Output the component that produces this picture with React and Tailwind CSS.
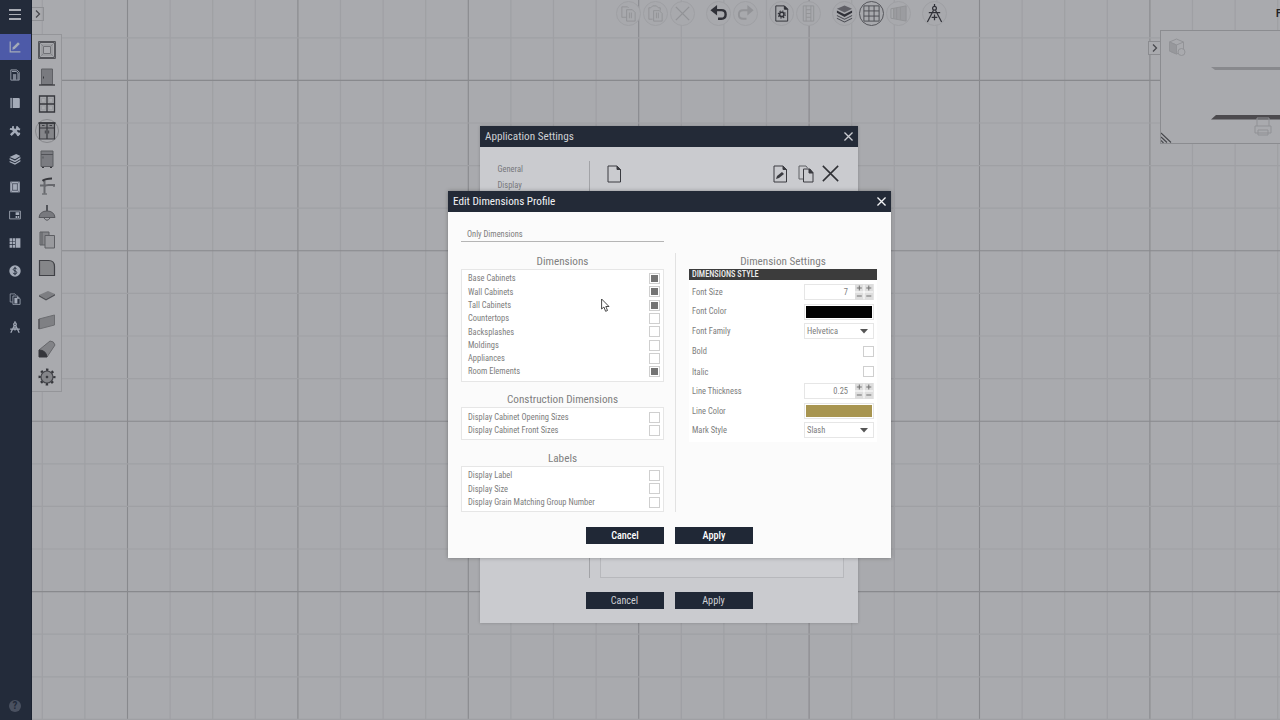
const NAV = ['plan', 'page', 'book', 'tools', 'layers', 'frame', 'card', 'table', 'price', 'copy', 'compass'];

const PALETTE = ['room', 'door', 'window', 'cabinet', 'appliance', 'faucet', 'lamp', 'panels', 'countertop', 'tile', 'board', 'molding', 'gear'];

const TOOLBAR = [
  [['copy', true], ['paste', true], ['remove', true]],
  [['undo'], ['redo', true]],
  [['settings'], ['column', true]],
  [['stack'], ['grid', false, true], ['perspective', true]],
  [['compass']],
];

const DIMENSIONS = [
  ['Base Cabinets', true],
  ['Wall Cabinets', true],
  ['Tall Cabinets', true],
  ['Countertops', false],
  ['Backsplashes', false],
  ['Moldings', false],
  ['Appliances', false],
  ['Room Elements', true],
];

const CONSTRUCTION = [
  ['Display Cabinet Opening Sizes', false],
  ['Display Cabinet Front Sizes', false],
];

const LABELS = [
  ['Display Label', false],
  ['Display Size', false],
  ['Display Grain Matching Group Number', false],
];

const STEP = 42.6;

function range(n) {
  return Array.from({ length: n }, (_, i) => i);
}

function CanvasGrid() {
  return (
    <svg className="absolute inset-0" width="1280" height="720">
      {range(30).map((i) => (
        <line key={`v${i}`} x1={42.3 + i * STEP} x2={42.3 + i * STEP} y1="0" y2="720"
          stroke={i % 4 === 2 ? '#88898d' : '#9fa0a4'} strokeWidth={i % 4 === 2 ? 1.1 : 1.2} />
      ))}
      {range(17).map((i) => (
        <line key={`h${i}`} y1={37.8 + i * STEP} y2={37.8 + i * STEP} x1="32" x2="1280"
          stroke={i % 4 === 1 ? '#88898d' : '#9fa0a4'} strokeWidth={i % 4 === 1 ? 1.1 : 1.2} />
      ))}
    </svg>
  );
}

const navArt = {
  plan: (
    <g>
      <path d="M2 1v17h17" fill="none" stroke="currentColor" strokeWidth="2" />
      <path d="M5.500 14.500l1-4 8.500-8.500 3 3-8.500 8.500z" fill="currentColor" />
    </g>
  ),
  page: (
    <g>
      <path d="M3 1.500h10l4 4v13H3z" fill="none" stroke="currentColor" strokeWidth="1.400" />
      <path d="M6.500 8.500H12V18H6.500z" fill="currentColor" opacity=".7" />
      <path d="M5 4h7l3 3v11" fill="none" stroke="currentColor" strokeWidth="1.600" />
    </g>
  ),
  book: (
    <g>
      <path d="M2 1.500h3.500v17H2z" fill="currentColor" opacity=".8" />
      <path d="M6.500 1.500H16q2 0 2 2v13q0 2-2 2H6.500z" fill="currentColor" />
    </g>
  ),
  tools: (
    <g fill="none" stroke="currentColor">
      <path d="M5 5l12 12" strokeWidth="4.400" />
      <path d="M16 4L3 17" strokeWidth="4" />
      <path d="M1.500 6.500l4.500 1 1-5.500M13 2l1 4.500 4.500 1M13.500 17.500l4.500-4.500" strokeWidth="3" />
    </g>
  ),
  layers: (
    <g fill="currentColor">
      <path d="M1 6.500l11-5 7 3.500-9 5.500z" />
      <path d="M1 8.300l9 4 9-5.500v3l-9 5.500-9-4z" />
      <path d="M1 13.200l9 4 9-5.500v2.300l-9 5.500-9-4z" />
    </g>
  ),
  frame: (
    <g>
      <path d="M2 1h16v18H2z" fill="currentColor" />
      <path d="M6 4.500h8v11H6z" fill="none" stroke="#3a4252" strokeWidth="1.200" />
      <path d="M2 1l4 3.500M18 1l-4 3.500M2 19l4-3.500M18 19l-4-3.500" stroke="#3a4252" strokeWidth=".8" />
    </g>
  ),
  card: (
    <g>
      <path d="M1 3.500h18v13H1z" fill="none" stroke="currentColor" strokeWidth="1.400" />
      <path d="M11 5.500h6v4.500h-6zM11 11.500h2.500v3.500H11zM14.500 11.500H17v3.500h-2.500z" fill="currentColor" />
    </g>
  ),
  table: (
    <path d="M1 2h4v4.500H1zM6 2h4v4.500H6zM1 7.700h4v4.500H1zM6 7.700h4v4.500H6zM1 13.400h4v4.500H1zM6 13.400h4v4.500H6zM11 2h8v16h-8z" fill="currentColor" />
  ),
  price: (
    <g>
      <circle cx="10" cy="10" r="9.500" fill="currentColor" />
      <path d="M13 7q-1-2-3-2t-3 2.200q0 1.800 3 2.600t3 2.900q0 2.300-3 2.300t-3-2M10 3v14" fill="none" stroke="#232b3a" strokeWidth="1.500" />
    </g>
  ),
  copy: (
    <g>
      <path d="M6 15H2V1.500h8l2 2" fill="none" stroke="currentColor" strokeWidth="1.200" />
      <path d="M6.500 5H14l4.500 4.500V19h-12z" fill="none" stroke="currentColor" strokeWidth="1.300" />
      <path d="M9 8h5v9.500H9z" fill="currentColor" />
      <path d="M13.500 5l4.500 4.500h-4.500z" fill="currentColor" />
    </g>
  ),
  compass: (
    <g fill="none" stroke="currentColor" strokeWidth="2.100">
      <circle cx="10" cy="5.500" r="2.200" />
      <path d="M10 .5v3M9 7.500L3 19.500M11 7.500l6 12M2 13.500h16M10 10v6" />
    </g>
  ),
};

const paletteArt = {
  room: (
    <g>
      <path d="M2 2h16v16H2z" strokeWidth="1.400" />
      <path d="M5 5h10v10H5z" stroke="#8b8c90" strokeWidth=".9" />
      <path d="M6.500 6.500h7v7h-7z" stroke="#707176" />
      <path d="M2 2l4.500 4.500M18 2l-4.500 4.500M2 18l4.500-4.500M18 18l-4.500-4.500" stroke="#808186" strokeWidth=".8" />
    </g>
  ),
  door: (
    <g>
      <path d="M4.500 2h11v15.500h-11z" fill="#797a7f" stroke="#5f6065" />
      <path d="M2 18h16" strokeWidth="1.300" />
      <path d="M6.500 9.500v2" />
    </g>
  ),
  window: (
    <g>
      <path d="M4.500 4.300h3.800v4H4.500zM11.700 4.300h3.800v4h-3.800zM4.500 11.800h3.800v4H4.500zM11.700 11.800h3.800v4h-3.800z" stroke="#96979b" strokeWidth=".8" />
      <path d="M2.500 2h15v16h-15zM10 2v16M2.500 10h15" strokeWidth="1.300" />
    </g>
  ),
  cabinet: (
    <g>
      <path d="M2.500 2h15v16h-15z" fill="#85868a" strokeWidth="1.200" />
      <path d="M1.500 2h17" strokeWidth="1.600" />
      <path d="M2.500 7h15M10 2v16" strokeWidth="1.200" />
      <path d="M5 4.500h2.500M12.500 4.500H15M8.300 9.500v3M11.700 9.500v3" strokeWidth=".9" />
    </g>
  ),
  appliance: (
    <g>
      <path d="M4 2h12v15.500H4z" fill="#7b7c81" stroke="#5b5c61" />
      <path d="M4 5.500h12M6 7.500v2" stroke="#515257" />
      <path d="M5 18.500h2M13 18.500h2" />
    </g>
  ),
  faucet: (
    <g>
      <path d="M7.500 17.500V5M7.500 10.500q1-1.500 4-1.500h5.500v1.800M3 9.500h5" stroke="#67686d" strokeWidth="2" />
      <path d="M5.500 4.800q3-2.300 9.500-2.300" strokeWidth="2.200" />
      <path d="M5 18h5" stroke="#55565b" />
    </g>
  ),
  lamp: (
    <g>
      <path d="M10 2v6" strokeWidth="1.500" />
      <path d="M2 14.500q1-6.500 8-6.500t8 6.500z" fill="#78797e" stroke="#56575c" />
      <path d="M7 15q3 4.500 6 0" stroke="#56575c" />
    </g>
  ),
  panels: (
    <g fill="#85868a" stroke="#5d5e63">
      <path d="M3 2h9v13H3z" />
      <path d="M8 5.500h9.500V18H8z" fill="#999a9e" />
      <path d="M5 2v13" />
    </g>
  ),
  countertop: <path d="M2.500 2.500h9q6 0 6 6v9h-15z" fill="#858689" stroke="#3f4045" strokeWidth="1.200" />,
  tile: (
    <g stroke="none">
      <path d="M2 10l9-4 7 3-9 5z" fill="#7d7e82" />
      <path d="M2 10l7 4 9-5v1.600l-9 5-7-4z" fill="#505156" />
    </g>
  ),
  board: (
    <g>
      <path d="M2 7l15.500-4v10L2 17z" fill="#7f8084" stroke="#6c6d71" />
      <path d="M2 7v10" stroke="#4d4e53" strokeWidth="1.200" />
    </g>
  ),
  molding: (
    <g>
      <path d="M2 11L13 2q4 0 5 4l-8 12z" fill="#828387" stroke="#66676b" />
      <path d="M2 11q7 0 8 7H2z" fill="#35363b" />
    </g>
  ),
  gear: (
    <g>
      <circle cx="10" cy="10" r="7.300" strokeWidth="2.400" strokeDasharray="2.400 3.333" strokeDashoffset="1.200" />
      <circle cx="10" cy="10" r="6" fill="#848589" stroke="#45464b" strokeWidth="1.200" />
      <circle cx="10" cy="10" r=".9" fill="#33343a" />
    </g>
  ),
};

const toolArt = {
  copy: <path d="M8 14H3V3h6l1 1M8 6h6l3 3v9H8zM11 9v6M13 9v6" />,
  paste: <path d="M7 16H3V4h2l2-2h4l2 2h2v3M8 7h6l3 3v8H8zM11 9v6M13 9v6" />,
  remove: <path d="M3 3l14 14M17 3L3 17" strokeWidth="1.400" />,
  undo: (
    <g>
      <path d="M5 6.500h8q4.500 0 4.500 4.500T13 15.500h-3.500" strokeWidth="2.500" />
      <path d="M1.500 6.500L8.500 1v11z" fill="currentColor" stroke="none" />
    </g>
  ),
  redo: (
    <g>
      <path d="M15 6.500H7.500Q3 6.500 3 11t4.500 4.500H11" strokeWidth="2" />
      <path d="M18.500 6.500L12 1v11z" fill="currentColor" stroke="none" />
    </g>
  ),
  settings: (
    <g>
      <path d="M4 2h9l3.500 3.500V18H4z" />
      <path d="M13 2v3.500h3.500z" fill="currentColor" />
      <circle cx="10.300" cy="11" r="2.300" strokeWidth="1.600" />
      <circle cx="10.300" cy="11" r="3.700" strokeWidth="1.200" strokeDasharray="1.450 1.450" />
    </g>
  ),
  column: <path d="M4.500 2h11v16h-11zM7.500 2v16M12.500 2v16M7.500 6h5M7.500 10h5M7.500 14h5" />,
  stack: (
    <g stroke="none" fill="currentColor">
      <path d="M10 1.500l8 3.500-8 4-8-4z" opacity=".6" />
      <path d="M2 6.800l8 4 8-4v2.500l-8 4.500-8-4.500z" />
      <path d="M2 11.500l8 4 8-4v1.200l-8 4-8-4zM2 14.500l8 4 8-4v1l-8 4-8-4z" opacity=".8" />
    </g>
  ),
  grid: <path d="M2 2h16v16H2zM7.300 2v16M12.700 2v16M2 7.300h16M2 12.700h16" stroke="#4d4e53" />,
  perspective: (
    <g>
      <path d="M2 5l3-.5v11L2 15z" />
      <path d="M5 4.500L18 2v16L5 15.500zM8 4v12M12 3.500v13" fill="#9b9ca0" />
    </g>
  ),
  compass: (
    <g strokeWidth="1.300">
      <circle cx="10" cy="4.500" r="2" />
      <path d="M10 0v2.500M9 6.500L2.500 19M11 6.500L17.500 19M4 9h12M10 11v6M7 14h6" />
    </g>
  ),
};

function Art({ children, size }) {
  return (
    <svg width={size} height={size} viewBox="0 0 20 20" fill="none" stroke="currentColor" strokeWidth="1" className="shrink-0">
      {children}
    </svg>
  );
}

function Sidebar() {
  return (
    <aside className="relative flex w-8 shrink-0 flex-col border-r border-[#1b2230] bg-[#232b3a] text-[#a4abb8]">
      <div className="flex h-[33px] flex-col items-center gap-[3px] pt-[9px] pr-[2px]">
        <span className="h-[1.500px] w-3 bg-[#a9adb5]" />
        <span className="h-[1.500px] w-3 bg-[#a9adb5]" />
        <span className="h-[1.500px] w-3 bg-[#a9adb5]" />
      </div>
      {NAV.map((name) => (
        <div key={name} className="flex h-7 items-center">
          <div className={`flex h-[26px] w-full items-center justify-center pr-[1px] ${name === 'plan' ? 'bg-[#4d5aa8]' : ''}`}>
            <svg width="12" height="12" viewBox="0 0 20 20">{navArt[name]}</svg>
          </div>
        </div>
      ))}
      <div className="mt-auto mb-2 ml-[9px] flex h-3 w-3 items-center justify-center rounded-full bg-[#4a5160] text-[11px] font-bold text-[#232b3a]">?</div>
    </aside>
  );
}

function Palette() {
  return (
    <div className="relative flex w-[30px] flex-col items-center border border-l-0 border-[#949599] bg-[#a9aaae] pt-[1px] pb-[1px] text-[#36373c]">
      {PALETTE.map((name) => (
        <div key={name} className="flex h-[27.250px] w-full items-center justify-center">
          <div className={`flex h-6 w-6 shrink-0 items-center justify-center rounded-full ${name === 'cabinet' ? 'border border-[#86878b]' : ''}`}>
            <Art size={20}>{paletteArt[name]}</Art>
          </div>
        </div>
      ))}
    </div>
  );
}

function Toolbar() {
  return (
    <div className="absolute top-[1px] left-[582.500px] flex gap-[9px]">
      {TOOLBAR.map((group, i) => (
        <div key={i} className="flex">
          {group.map(([name, muted, active]) => (
            <div key={name} className="flex w-[27px] justify-center">
              <div
                className={`flex h-[25px] w-[25px] items-center justify-center rounded-full border ${
                  active ? 'border-[#55565b]' : 'border-[#9fa0a4]'
                } ${muted ? 'text-[#929397]' : 'text-[#303138]'} bg-[#a8a9ad]`}
              >
                <Art size={19}>{toolArt[name]}</Art>
              </div>
            </div>
          ))}
        </div>
      ))}
    </div>
  );
}

function Chevron() {
  return (
    <svg width="6" height="8" viewBox="0 0 6 8" fill="none" stroke="#48494e" strokeWidth="1.300">
      <path d="M1 .5L4.500 4 1 7.500" />
    </svg>
  );
}

function Preview() {
  return (
    <div className="absolute top-[30px] left-[1116px] flex items-start">
      <div className="mt-[11px] flex h-[14px] w-3 items-center justify-center border border-r-0 border-[#8b8c90] bg-[#a9aaae]">
        <Chevron />
      </div>
      <div className="h-[114px] w-[124px] border border-[#8b8c90] bg-[#a9aaae]">
        <svg width="122" height="112" fill="none">
          <g stroke="#929397">
            <path d="M8.500 11l7-3 7 3v9l-7 3-7-3zM8.500 11l7 3 7-3M15.500 14v9" />
            <path d="M8.500 11l7 3v9l-7-3z" fill="#97989c" />
            <circle cx="20.500" cy="21" r="3.500" fill="#a9aaae" />
          </g>
          <path d="M50 36h72v3H54z" fill="#88898d" />
          <path d="M55 84h67v4.500H50z" fill="#4c4a4e" />
          <g stroke="#909195">
            <path d="M96 95v-8h12v8M94 95h16v7H94zM97 99h10v5H97z" />
          </g>
          <path d="M0 102l10 9.500M0 106l6 5.500M0 109.500l2.500 2.500" stroke="#44454a" strokeWidth="1.100" />
        </svg>
      </div>
    </div>
  );
}

function CloseIcon({ size = 9, color = '#fff', width = 1.5 }) {
  return (
    <svg width={size} height={size} viewBox="0 0 10 10" stroke={color} strokeWidth={width}>
      <path d="M.5.5l9 9M9.500.5l-9 9" />
    </svg>
  );
}

function TitleBar({ title, muted }) {
  return (
    <div className={`flex h-[21px] shrink-0 items-center justify-between bg-[#232a37] px-[5px] text-[11.200px] font-[450] ${muted ? 'text-[#ced0d4]' : 'text-[#f2f3f5]'}`}>
      <span className="pt-[1.500px]">{title}</span>
      <CloseIcon color={muted ? '#c9cbd0' : '#f2f3f5'} />
    </div>
  );
}

function Buttons({ muted }) {
  return (
    <div className={`flex justify-center gap-[11px] text-[10.200px] ${muted ? 'text-[#ced0d4]' : 'font-medium text-white'}`}>
      <button className="h-[17px] w-[78px] bg-[#202836] leading-[16px]">Cancel</button>
      <button className="h-[17px] w-[78px] bg-[#202836] leading-[16px]">Apply</button>
    </div>
  );
}

function SettingsDialog() {
  return (
    <div className="absolute top-[126px] left-[480px] flex h-[497px] w-[378px] flex-col bg-[#cacbcf] shadow-[0_0_3px_rgba(0,0,0,0.2)]">
      <TitleBar title="Application Settings" muted />
      <div className="flex h-[431px] shrink-0">
        <div className="mt-[13.500px] w-[110px] border-r border-[#a2a3a7] pl-[17.500px] text-[8.500px] leading-[16.500px] text-[#77787c]">
          <p>General</p>
          <p>Display</p>
        </div>
        <div className="mr-[14px] ml-[10px] flex flex-1 flex-col text-[#3a3b40]">
          <div className="flex h-[53px] shrink-0 items-center pr-[5px] pl-[4px]">
            <Art size={20}>
              <path d="M4 2h9l3.500 3.500V18H4z" />
              <path d="M13 2v3.500h3.500z" fill="currentColor" />
            </Art>
            <div className="ml-auto flex items-center gap-[6px]">
              <Art size={20}>
                <path d="M4 2h9l3.500 3.500V18H4z" />
                <path d="M13 2v3.500h3.500z" fill="currentColor" />
                <path d="M6 15l1-3 5-4 2 2-5 4z" fill="currentColor" stroke="none" />
              </Art>
              <Art size={20}>
                <path d="M7.500 15H3V2h7l1.500 2" stroke="#5f6065" />
                <path d="M7.500 5H14l3 3.500V18H7.500z" />
                <path d="M13 5v4h4z" fill="currentColor" />
              </Art>
              <CloseIcon size={17} color="#303136" width={0.9} />
            </div>
          </div>
          <div className="flex-1 border border-[#b7b8bc] bg-[#cdced2]" />
        </div>
      </div>
      <div className="mt-[14px]"><Buttons muted /></div>
    </div>
  );
}

function Check({ on }) {
  return (
    <span className="flex h-[11px] w-[11px] shrink-0 items-center justify-center border border-[#cfcfcf] bg-white">
      {on && <span className="h-[7px] w-[7px] bg-[#747474]" />}
    </span>
  );
}

function CheckGroup({ title, rows }) {
  return (
    <section>
      <h3 className="h-4 pt-px text-center text-[11.200px] leading-4 text-[#808080]">{title}</h3>
      <div className="border border-[#e6e6e6] bg-white pt-[2px] pr-[3px] pb-[2.500px] pl-[6px]">
        {rows.map(([label, on]) => (
          <div key={label} className="flex h-[13.300px] items-center justify-between">
            <span>{label}</span>
            <Check on={on} />
          </div>
        ))}
      </div>
    </section>
  );
}

function Field({ label, children, tall }) {
  return (
    <div className={`flex items-center justify-between ${tall ? 'h-[20.300px] pt-[1px]' : 'h-[19.500px]'}`}>
      <span>{label}</span>
      {children}
    </div>
  );
}

function Stepper({ value }) {
  return (
    <div className="flex h-4 w-[70px] items-center justify-end border border-[#e6e6e6] bg-white">
      <span className="mr-[7px]">{value}</span>
      <svg width="18" height="16" viewBox="0 0 18 16">
        <path d="M0 0h8.500v7.500H0zM9.500 0H18v7.500H9.500zM0 8.500h8.500V16H0zM9.500 8.500H18V16H9.500z" fill="#dedede" />
        <path d="M1.800 4h5M4.300 1.500v5M11.300 4h5M13.800 1.500v5M1.800 12h5M11.300 12h5" stroke="#707070" />
      </svg>
    </div>
  );
}

function Swatch({ color }) {
  return (
    <div className="h-4 w-[70px] border border-[#e6e6e6] bg-white p-px">
      <div className="h-full w-full" style={{ backgroundColor: color }} />
    </div>
  );
}

function Select({ value }) {
  return (
    <div className="flex h-4 w-[70px] items-center justify-between border border-[#e6e6e6] bg-white pr-[5px] pl-[2px]">
      <span>{value}</span>
      <svg width="8" height="4.500" viewBox="0 0 9 5"><path d="M0 0h9L4.500 5z" fill="#555" /></svg>
    </div>
  );
}

function ProfileDialog() {
  return (
    <div className="absolute top-[191px] left-[448px] flex h-[367px] w-[443px] flex-col bg-[#fbfbfb] text-[8.450px] text-[#7d7d7d] shadow-[0_0_4px_rgba(0,0,0,0.3)]">
      <TitleBar title="Edit Dimensions Profile" />
      <div className="flex h-[300px] shrink-0">
        <div className="ml-[13px] flex w-[203px] flex-col pt-[15px]">
          <div className="h-[15px] border-b border-[#b5b5b5] pl-[6px] leading-[14px]">Only Dimensions</div>
          <div className="mt-[11px] flex flex-col gap-[9.500px]">
            <CheckGroup title="Dimensions" rows={DIMENSIONS} />
            <CheckGroup title="Construction Dimensions" rows={CONSTRUCTION} />
            <CheckGroup title="Labels" rows={LABELS} />
          </div>
        </div>
        <div className="mt-[41px] ml-[11px] w-px bg-[#e2e2e2]" />
        <div className="mt-[41px] ml-[13px] w-[188px]">
          <h3 className="h-4 pt-px text-center text-[11.200px] leading-4 text-[#808080]">Dimension Settings</h3>
          <div className="h-[11px] bg-[#3c3c3c] pl-[3px] text-[8.300px] leading-[11px] font-medium text-[#ededed]">DIMENSIONS STYLE</div>
          <div className="bg-white px-[3px] pt-[2.500px] pb-[2px]">
            <Field label="Font Size"><Stepper value="7" /></Field>
            <Field label="Font Color"><Swatch color="#000000" /></Field>
            <Field label="Font Family"><Select value="Helvetica" /></Field>
            <Field label="Bold" tall><Check /></Field>
            <Field label="Italic" tall><Check /></Field>
            <Field label="Line Thickness"><Stepper value="0.25" /></Field>
            <Field label="Line Color"><Swatch color="#a89550" /></Field>
            <Field label="Mark Style"><Select value="Slash" /></Field>
          </div>
        </div>
      </div>
      <div className="mt-[15px]"><Buttons /></div>
    </div>
  );
}

export default function App() {
  return (
    <div className="relative flex h-[720px] w-[1280px] overflow-hidden bg-[#a9aaae] font-['Roboto_Condensed',Roboto,sans-serif] [font-stretch:75%]">
      <CanvasGrid />
      <Sidebar />
      <main className="relative flex-1">
        <div className="mt-[7px] mb-[13px] flex h-[14px] w-3 items-center justify-center border border-l-0 border-[#8f9094]">
          <Chevron />
        </div>
        <Palette />
        <Toolbar />
        <Preview />
        <span className="absolute top-[7px] left-[1244px] text-[10px] leading-[14px] font-bold text-[#202126]">F</span>
      </main>
      <SettingsDialog />
      <ProfileDialog />
      <svg className="absolute top-[298px] left-[601px]" width="9" height="15" viewBox="0 0 9 15" fill="#fff" stroke="#333" strokeWidth=".9">
        <path d="M.6 1v10l2.300-2 1.700 4.300 1.900-.8-1.700-4H8z" />
      </svg>
    </div>
  );
}
